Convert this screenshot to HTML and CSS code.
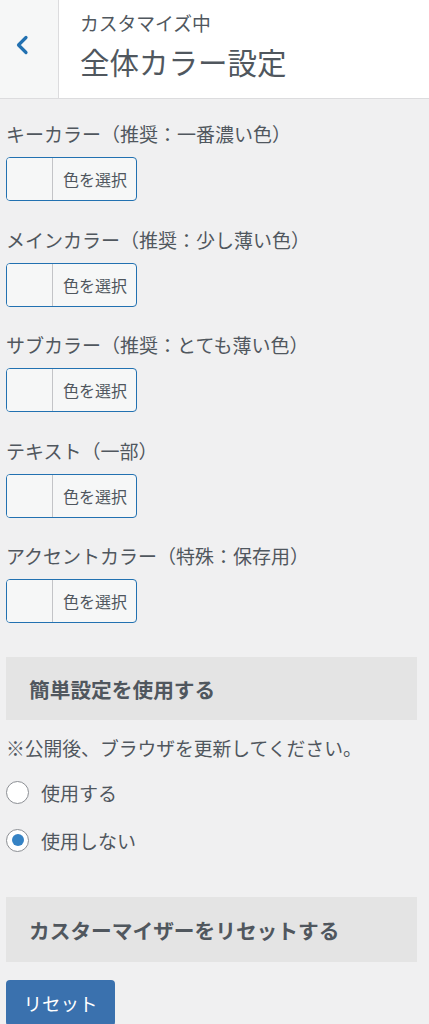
FILE: index.html
```html
<!DOCTYPE html>
<html lang="ja">
<head>
<meta charset="utf-8">
<title>全体カラー設定</title>
<link rel="stylesheet" href="styles.css">
</head>
<body>
<div class="panel">
  <header class="head">
    <button class="back" aria-label="戻る">
      <svg width="14" height="20" viewBox="0 0 14 20"><polyline points="11,2.5 3.5,10 11,17.5" fill="none" stroke="#2271b1" stroke-width="3.2" stroke-linecap="round" stroke-linejoin="round"/></svg>
    </button>
    <div class="titles">
      <div class="action">カスタマイズ中</div>
      <h1 class="title">全体カラー設定</h1>
    </div>
  </header>
  <main class="content">
    <div class="control">
      <div class="label">キーカラー（推奨：一番濃い色）</div>
      <button class="picker"><span class="swatch"></span><span class="pick-text">色を選択</span></button>
    </div>
    <div class="control">
      <div class="label">メインカラー（推奨：少し薄い色）</div>
      <button class="picker"><span class="swatch"></span><span class="pick-text">色を選択</span></button>
    </div>
    <div class="control">
      <div class="label">サブカラー（推奨：とても薄い色）</div>
      <button class="picker"><span class="swatch"></span><span class="pick-text">色を選択</span></button>
    </div>
    <div class="control">
      <div class="label">テキスト（一部）</div>
      <button class="picker"><span class="swatch"></span><span class="pick-text">色を選択</span></button>
    </div>
    <div class="control">
      <div class="label">アクセントカラー（特殊：保存用）</div>
      <button class="picker"><span class="swatch"></span><span class="pick-text">色を選択</span></button>
    </div>

    <div class="heading heading-first">簡単設定を使用する</div>
    <div class="note">※公開後、ブラウザを更新してください。</div>
    <div class="radios">
      <label class="radio"><span class="circle"></span><span>使用する</span></label>
      <label class="radio"><span class="circle checked"></span><span>使用しない</span></label>
    </div>

    <div class="heading heading-second">カスターマイザーをリセットする</div>
    <button class="reset">リセット</button>
  </main>
</div>
</body>
</html>
```
FILE: styles.css
```css
* { box-sizing: border-box; }
html, body {
  margin: 0;
  padding: 0;
  background: #f0f0f1;
  font-family: "Noto Sans CJK JP", "Noto Sans", sans-serif;
  color: #50575e;
}
.panel { width: 429px; }
.head {
  display: flex;
  height: 99px;
  background: #fff;
  border-bottom: 1px solid #dcdcde;
}
.back {
  width: 59px;
  height: 98px;
  border: 0;
  border-right: 1px solid #dcdcde;
  background: #f6f7f7;
  display: flex;
  align-items: center;
  justify-content: flex-start;
  padding: 0 0 9px 15px;
  cursor: pointer;
}
.titles {
  padding: 11px 0 0 21px;
}
.action {
  font-size: 18.8px;
  line-height: 24px;
  color: #50575e;
}
.title {
  margin: 7px 0 0;
  font-size: 29.5px;
  line-height: 38px;
  font-weight: 400;
  color: #50575e;
}
.content {
  padding: 22px 12px 40px 6px;
}
.control { margin-bottom: 25.5px; }
.label {
  font-size: 19px;
  line-height: 26px;
  color: #50575e;
  white-space: nowrap;
}
.picker {
  margin-top: 10px;
  display: flex;
  width: 131px;
  height: 44px;
  padding: 0;
  border: 1px solid #2271b1;
  border-radius: 4px;
  background: #f6f7f7;
  overflow: hidden;
  font-family: inherit;
  cursor: pointer;
}
.swatch {
  width: 46px;
  height: 100%;
  border-right: 1px solid #c3c4c7;
  background: #f6f7f7;
}
.pick-text {
  flex: 1;
  display: flex;
  align-items: center;
  justify-content: center;
  font-size: 16px;
  color: #50575e;
  padding-left: 1px;
}
.heading {
  background: #e4e4e4;
  font-size: 20.7px;
  font-weight: 700;
  color: #50575e;
  padding-left: 23px;
  display: flex;
  align-items: center;
  width: 411px;
}
.heading-first { margin-top: 34px; height: 63px; }
.heading-second { margin-top: 42px; height: 65px; }
.note {
  margin-top: 15px;
  font-size: 18.8px;
  line-height: 26px;
  white-space: nowrap;
}
.radios {
  margin-top: 16px;
  display: flex;
  flex-direction: column;
  gap: 18px;
}
.radio {
  display: flex;
  align-items: center;
  height: 30px;
  font-size: 19px;
  gap: 12px;
}
.circle {
  width: 23px;
  height: 23px;
  border-radius: 50%;
  border: 1px solid #8c8f94;
  background: #fff;
  display: flex;
  align-items: center;
  justify-content: center;
}
.circle.checked::after {
  content: "";
  width: 12px;
  height: 12px;
  border-radius: 50%;
  background: #3582c4;
}
.reset {
  margin-top: 18px;
  width: 109px;
  height: 46px;
  border: 0;
  border-radius: 4px;
  background: #3a71ae;
  color: #fff;
  font-family: inherit;
  font-size: 18.5px;
  padding: 0;
  cursor: pointer;
}
```
